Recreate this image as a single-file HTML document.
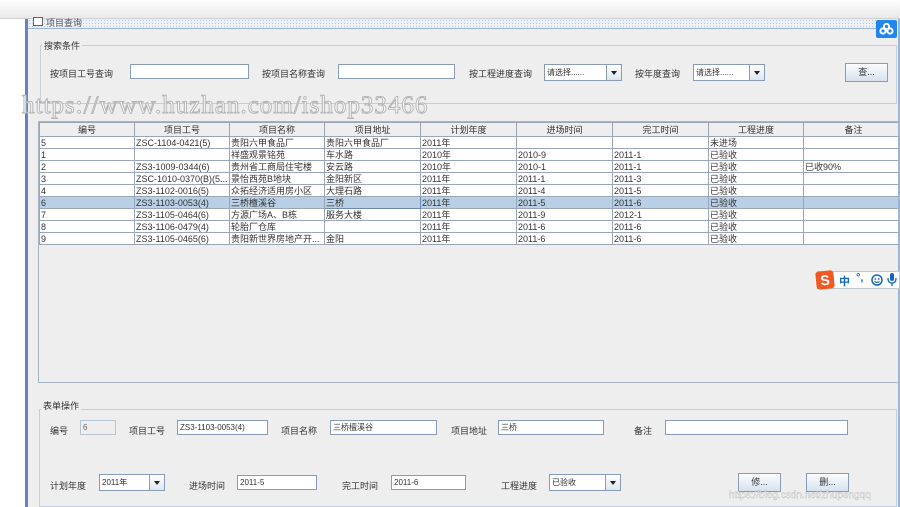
<!DOCTYPE html>
<html><head><meta charset="utf-8"><style>
*{margin:0;padding:0;box-sizing:border-box}
body{width:900px;height:507px;overflow:hidden;background:#fff;position:relative;font-family:"Liberation Sans","Noto Sans CJK SC",sans-serif;font-size:9px;color:#333}
.a{position:absolute;white-space:nowrap}
.top{left:0;top:0;width:900px;height:19px;background:linear-gradient(#fdfdfd,#e9e9e9);border-bottom:1px solid #d0d0d0}
.win{left:25px;top:19px;width:873px;height:488px;background:#eeeeee;border-left:3px solid #6483c4}
.title{left:28px;top:19px;width:848px;height:10px;background-image:radial-gradient(#b8c8e0 0.7px,transparent 0.8px);background-size:3px 3px;background-color:#eef2f8;border-bottom:1px solid #9eb4d4}
.fs{border:1px solid #c4cfdc}
.lg{background:#eee;padding:0 2px;font-size:9px;color:#333}
.tf{background:#fff;border:1px solid #8a9bb4;height:15px;font-size:8px;padding-left:2px;line-height:13px}
.cb{background:#fff;border:1px solid #8a9bb4;height:17px;font-size:8px;line-height:15px;padding-left:2px}
.cb i{position:absolute;right:0;top:0;width:15px;height:15px;border-left:1px solid #8a9bb4;background:linear-gradient(#fff,#dde6f0)}
.cb i:after{content:"";position:absolute;left:4px;top:6px;border:3.5px solid transparent;border-top:4px solid #222}
.btn{border:1px solid #8a9bb4;background:linear-gradient(#fafcff,#d6e2ee);text-align:center;font-size:9px;line-height:17px;height:19px}
table{border-collapse:collapse;table-layout:fixed}
td{border:1px solid #9aa6b6;height:12px;font-size:9px;line-height:10px;padding-left:1px;white-space:nowrap;overflow:hidden;background:#fff}
th{border:1px solid #9aa6b6;height:14px;font-weight:normal;font-size:9px;background:#eee}
tr.s td{background:#b8cfe5}
.wm{left:22px;top:92px;font-family:"Liberation Serif",serif;font-size:25px;color:#fff;-webkit-text-stroke:1px #b5b5b5;letter-spacing:1px}
</style></head><body>
<div class="a top"></div>
<div class="a win"></div>
<div class="a title"></div>
<div class="a" style="left:33px;top:17px;width:10px;height:9px;border:1px solid #666;background:#fff"></div>
<div class="a" style="left:46px;top:16px;font-size:9px;color:#555">项目查询</div>
<div class="a" style="left:876px;top:20px;width:21px;height:18px;background:#1e88f0;border-radius:2px">
<svg width="21" height="18" viewBox="0 0 21 18"><g fill="none" stroke="#fff" stroke-width="2"><circle cx="10.5" cy="6.5" r="2.6"/><circle cx="7" cy="11" r="2.6"/><circle cx="14" cy="11" r="2.6"/></g></svg></div>

<div class="a fs" style="left:40px;top:45px;width:857px;height:59px"></div>
<div class="a lg" style="left:42px;top:39px">搜索条件</div>
<div class="a" style="left:50px;top:67px">按项目工号查询</div>
<div class="a tf" style="left:130px;top:64px;width:119px"></div>
<div class="a" style="left:262px;top:67px">按项目名称查询</div>
<div class="a tf" style="left:338px;top:64px;width:117px"></div>
<div class="a" style="left:469px;top:67px">按工程进度查询</div>
<div class="a cb" style="left:544px;top:64px;width:78px">请选择......<i></i></div>
<div class="a" style="left:635px;top:67px">按年度查询</div>
<div class="a cb" style="left:693px;top:64px;width:72px">请选择......<i></i></div>
<div class="a btn" style="left:845px;top:63px;width:43px">查...</div>

<div class="a" style="left:38px;top:121px;width:862px;height:262px;border:1px solid #a8b4c4;border-right:none;background:#eee;overflow:hidden">
<table style="width:864px">
<colgroup><col style="width:95px"><col style="width:95px"><col style="width:95px"><col style="width:96px"><col style="width:96px"><col style="width:96px"><col style="width:96px"><col style="width:95px"><col style="width:100px"></colgroup>
<tr><th>编号</th><th>项目工号</th><th>项目名称</th><th>项目地址</th><th>计划年度</th><th>进场时间</th><th>完工时间</th><th>工程进度</th><th>备注</th></tr>
<tr><td>5</td><td>ZSC-1104-0421(5)</td><td>贵阳六甲食品厂</td><td>贵阳六甲食品厂</td><td>2011年</td><td></td><td></td><td>未进场</td><td></td></tr>
<tr><td>1</td><td></td><td>祥盛观景铭苑</td><td>车水路</td><td>2010年</td><td>2010-9</td><td>2011-1</td><td>已验收</td><td></td></tr>
<tr><td>2</td><td>ZS3-1009-0344(6)</td><td>贵州省工商局住宅楼</td><td>安云路</td><td>2010年</td><td>2010-1</td><td>2011-1</td><td>已验收</td><td>已收90%</td></tr>
<tr><td>3</td><td>ZSC-1010-0370(B)(5...</td><td>景怡西苑B地块</td><td>金阳新区</td><td>2011年</td><td>2011-1</td><td>2011-3</td><td>已验收</td><td></td></tr>
<tr><td>4</td><td>ZS3-1102-0016(5)</td><td>众拓经济适用房小区</td><td>大理石路</td><td>2011年</td><td>2011-4</td><td>2011-5</td><td>已验收</td><td></td></tr>
<tr class="s"><td>6</td><td>ZS3-1103-0053(4)</td><td>三桥檀溪谷</td><td style="border:1px solid #6a88b0">三桥</td><td>2011年</td><td>2011-5</td><td>2011-6</td><td>已验收</td><td></td></tr>
<tr><td>7</td><td>ZS3-1105-0464(6)</td><td>方源广场A、B栋</td><td>服务大楼</td><td>2011年</td><td>2011-9</td><td>2012-1</td><td>已验收</td><td></td></tr>
<tr><td>8</td><td>ZS3-1106-0479(4)</td><td>轮胎厂仓库</td><td></td><td>2011年</td><td>2011-6</td><td>2011-6</td><td>已验收</td><td></td></tr>
<tr><td>9</td><td>ZS3-1105-0465(6)</td><td>贵阳新世界房地产开...</td><td>金阳</td><td>2011年</td><td>2011-6</td><td>2011-6</td><td>已验收</td><td></td></tr>
</table></div>
<div class="a" style="left:898px;top:19px;width:2px;height:488px;background:#9eb4d4"></div>

<div class="a" style="left:817px;top:271px;width:83px;height:18px;background:#fff;border:1px solid #c0c8d0"></div>
<div class="a" style="left:816px;top:271px;width:18px;height:18px;background:#f05a22;border-radius:3px;transform:rotate(-6deg);color:#fff;font-weight:bold;font-size:14px;text-align:center;line-height:18px">S</div>
<div class="a" style="left:839px;top:273px;color:#1565c0;font-size:11px;font-weight:bold">中</div>
<div class="a" style="left:856px;top:272px;color:#1565c0;font-size:11px;font-weight:bold">°,</div>
<svg class="a" style="left:871px;top:274px" width="12" height="12"><circle cx="6" cy="6" r="5" fill="none" stroke="#1565c0" stroke-width="1.5"/><circle cx="4.3" cy="5" r="0.9" fill="#1565c0"/><circle cx="7.7" cy="5" r="0.9" fill="#1565c0"/><path d="M3.5 7.3 Q6 9.5 8.5 7.3" fill="none" stroke="#1565c0" stroke-width="1.2"/></svg>
<svg class="a" style="left:887px;top:273px" width="10" height="14"><rect x="3" y="0" width="4" height="8" rx="2" fill="#1565c0"/><path d="M1 5 Q1 10 5 10 Q9 10 9 5 M5 10 V13" fill="none" stroke="#1565c0" stroke-width="1.3"/></svg>

<div class="a fs" style="left:39px;top:409px;width:858px;height:98px"></div>
<div class="a lg" style="left:41px;top:399px">表单操作</div>
<div class="a" style="left:50px;top:424px">编号</div>
<div class="a tf" style="left:80px;top:420px;width:36px;background:#eee;border-color:#b8c4d4;color:#666">6</div>
<div class="a" style="left:129px;top:424px">项目工号</div>
<div class="a tf" style="left:177px;top:420px;width:91px">ZS3-1103-0053(4)</div>
<div class="a" style="left:281px;top:424px">项目名称</div>
<div class="a tf" style="left:330px;top:420px;width:107px">三桥檀溪谷</div>
<div class="a" style="left:451px;top:424px">项目地址</div>
<div class="a tf" style="left:498px;top:420px;width:106px">三桥</div>
<div class="a" style="left:634px;top:424px">备注</div>
<div class="a tf" style="left:665px;top:420px;width:183px"></div>

<div class="a" style="left:50px;top:479px">计划年度</div>
<div class="a cb" style="left:99px;top:474px;width:66px">2011年<i></i></div>
<div class="a" style="left:189px;top:479px">进场时间</div>
<div class="a tf" style="left:237px;top:475px;width:80px">2011-5</div>
<div class="a" style="left:342px;top:479px">完工时间</div>
<div class="a tf" style="left:391px;top:475px;width:75px">2011-6</div>
<div class="a" style="left:501px;top:479px">工程进度</div>
<div class="a cb" style="left:549px;top:474px;width:72px">已验收<i></i></div>
<div class="a btn" style="left:738px;top:473px;width:43px">修...</div>
<div class="a btn" style="left:806px;top:473px;width:43px">删...</div>
<div class="a" style="left:729px;top:490px;color:#fff;-webkit-text-stroke:0.4px #bbb;font-size:10px">https://blog.csdn.net/zhupengqq</div>

<div class="a wm">https://www.huzhan.com/ishop33466</div>
</body></html>
